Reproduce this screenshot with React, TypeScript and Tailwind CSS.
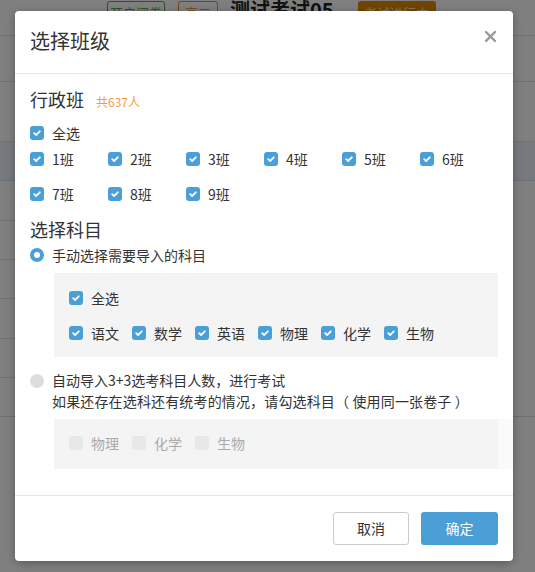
import React from "react";

const FONT = { fontFamily: '"Noto Sans CJK SC", "Noto Sans", sans-serif' };

function Check({ disabled = false }: { disabled?: boolean }) {
  if (disabled) {
    return <span className="w-[14px] h-[14px] rounded-[3px] bg-[#e8e8e8] shrink-0" />;
  }
  return (
    <span className="w-[14px] h-[14px] rounded-[3px] bg-[#4a9fd8] shrink-0 flex items-center justify-center">
      <svg width="14" height="14" viewBox="0 0 14 14">
        <path d="M4.2 7.2 L6.1 9 L9.8 5.3" fill="none" stroke="#fff" strokeWidth="1.8" strokeLinecap="round" strokeLinejoin="round" />
      </svg>
    </span>
  );
}

function CheckItem({ label, disabled = false, className = "" }: { label: string; disabled?: boolean; className?: string }) {
  return (
    <div className={`flex items-center h-[20px] gap-[8px] ${className}`}>
      <Check disabled={disabled} />
      <span className={`text-[14px] leading-[20px] ${disabled ? "text-[#aaaaaa]" : "text-[#333333]"}`}>{label}</span>
    </div>
  );
}

const classes = ["1班", "2班", "3班", "4班", "5班", "6班", "7班", "8班", "9班"];
const subjects = ["语文", "数学", "英语", "物理", "化学", "生物"];

export default function App() {
  return (
    <div className="relative w-[535px] h-[572px] overflow-hidden bg-white" style={FONT}>
      {/* page underneath */}
      <div className="flex flex-col">
        <div className="h-[36px] border-b border-[#dedede] flex items-start pt-[1px]">
          <div className="ml-[107px] w-[58px] h-[24px] border border-[#4caf50] rounded-[3px] text-[#4caf50] text-[13px] leading-[22px] text-center">开启阅卷</div>
          <div className="ml-[13px] w-[40px] h-[24px] border border-[#e6921e] rounded-[3px] text-[#e6921e] text-[13px] leading-[22px] text-center">高二</div>
          <div className="ml-[12px] -mt-[5px] text-[20px] font-bold text-[#222] leading-[28px]">测试考试05</div>
          <div className="ml-[24px] w-[78px] h-[24px] bg-[#e08a00] rounded-[3px] text-[#fff2d0] text-[13px] leading-[24px] text-center">考试进行中</div>
        </div>
        <div className="h-[46px] border-b border-[#dedede]" />
        <div className="h-[59px]" />
        <div className="h-[40px] bg-[#ecf4fc] border-t border-b border-[#dde3ea]" />
        <div className="w-[300px] h-[40px] border-b border-[#dedede]" />
        <div className="w-[300px] h-[39px] border-b border-[#dedede]" />
        <div className="w-[300px] h-[39px] border-b border-[#dedede]" />
        <div className="w-[300px] h-[40px] border-b border-[#dedede]" />
        <div className="w-[300px] h-[39px] border-b border-[#dedede]" />
        <div className="h-[39px] border-b border-[#dedede]" />
      </div>

      {/* mask */}
      <div className="absolute inset-0 bg-black/50" />

      {/* dialog */}
      <div className="absolute left-[15px] top-[11px] w-[498px] h-[550px] bg-white rounded-[4px] shadow-[0_2px_8px_rgba(0,0,0,0.3)] flex flex-col">
        <div className="h-[63px] border-b border-[#e5e5e5] flex items-center justify-between pl-[15px] pr-[17px] shrink-0">
          <span className="text-[20px] text-[#333] leading-[28px] -mt-[2px]">选择班级</span>
          <svg width="11" height="11" viewBox="0 0 11 11" className="-mt-[11px]">
            <path d="M1 1 L10 10 M10 1 L1 10" stroke="#999" strokeWidth="2.4" strokeLinecap="square" />
          </svg>
        </div>

        <div className="flex-1 pl-[15px] flex flex-col">
          <div className="mt-[13px] flex items-baseline h-[24px]">
            <span className="text-[18px] leading-[24px] text-[#333]">行政班</span>
            <span className="ml-[12px] text-[12px] text-[#f39c3c]">共637人</span>
          </div>
          <CheckItem label="全选" className="mt-[12px]" />
          <div className="mt-[6px] grid grid-cols-[repeat(6,78px)] gap-y-[15px]">
            {classes.map((c) => (
              <CheckItem key={c} label={c} />
            ))}
          </div>

          <div className="mt-[13px] text-[18px] leading-[24px] text-[#333]">选择科目</div>
          <div className="mt-[4px] flex items-center h-[20px] gap-[8px]">
            <span className="w-[14px] h-[14px] rounded-full border-[4px] border-[#4a9fd8] bg-white shrink-0" />
            <span className="text-[14px] text-[#333]">手动选择需要导入的科目</span>
          </div>
          <div className="mt-[8px] ml-[24px] w-[444px] h-[84px] bg-[#f4f4f4] pl-[15px] pt-[15px] flex flex-col">
            <CheckItem label="全选" />
            <div className="mt-[15px] flex gap-[13px]">
              {subjects.map((s) => (
                <CheckItem key={s} label={s} />
              ))}
            </div>
          </div>

          <div className="mt-[13px] flex gap-[8px]">
            <span className="mt-[4px] w-[14px] h-[14px] rounded-full bg-[#dddddd] shrink-0" />
            <div className="text-[14px] leading-[21px] text-[#333]">
              <div>自动导入3+3选考科目人数，进行考试</div>
              <div className="tracking-[0.15px]">如果还存在选科还有统考的情况，请勾选科目（ 使用同一张卷子 ）</div>
            </div>
          </div>
          <div className="mt-[7px] ml-[24px] h-[50px] bg-[#fafafa] flex">
            <div className="w-[444px] h-full bg-[#f4f4f4] pl-[15px] pt-[14px] flex gap-[13px]">
              {["物理", "化学", "生物"].map((s) => (
                <CheckItem key={s} label={s} disabled />
              ))}
            </div>
          </div>
        </div>

        <div className="h-[66px] border-t border-[#e5e5e5] flex items-center justify-end gap-[12px] pr-[15px] shrink-0">
          <button className="w-[76px] h-[33px] rounded-[3px] border border-[#cccccc] bg-white text-[14px] text-[#333]">取消</button>
          <button className="w-[77px] h-[33px] rounded-[3px] bg-[#4a9fd6] text-[14px] text-white">确定</button>
        </div>
      </div>
    </div>
  );
}
